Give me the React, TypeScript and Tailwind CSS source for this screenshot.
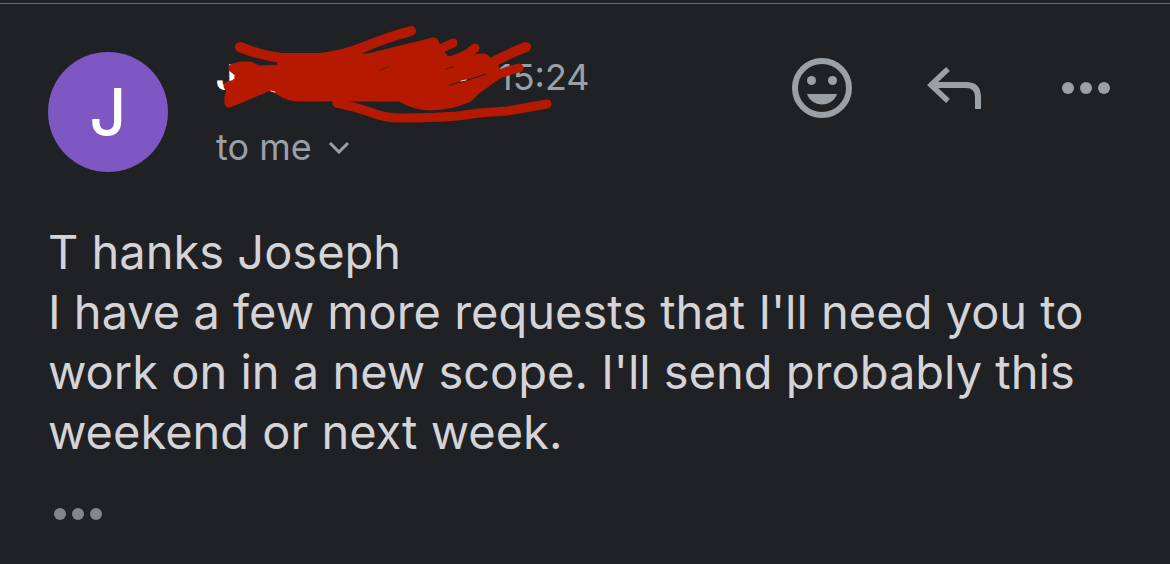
import React, { useState } from 'react';

function SmileIcon() {
  return (
    <svg viewBox="0 0 72 72" className="w-18 h-18" fill="currentColor" aria-hidden="true">
      <circle cx="36" cy="36" r="27" fill="none" stroke="currentColor" strokeWidth="6" />
      <circle cx="25.5" cy="28.5" r="4.5" />
      <circle cx="46.5" cy="28.5" r="4.5" />
      <path d="M21 42h30c-2 6-8 10.500-15 10.500S23 48 21 42z" />
    </svg>
  );
}

function ReplyIcon() {
  return (
    <svg viewBox="0 0 72 72" className="w-18 h-18" fill="none" stroke="currentColor" strokeWidth="6" aria-hidden="true">
      <path d="M30 17L13 33l17 16" strokeWidth="5.500" />
      <path d="M14 33h34q12 0 12 12v12" />
    </svg>
  );
}

function DotsIcon() {
  return (
    <svg viewBox="0 0 72 72" className="w-18 h-18" fill="currentColor" aria-hidden="true">
      <circle cx="18" cy="36" r="6" />
      <circle cx="36" cy="36" r="6" />
      <circle cx="54" cy="36" r="6" />
    </svg>
  );
}

// Marker scribble that hides the sender name
function Scribble() {
  return (
    <svg
      viewBox="216 17 340 110"
      className="absolute left-0 -top-10 w-[340px] h-[110px] max-w-none pointer-events-none"
      fill="none"
      stroke="#b51a00"
      strokeWidth="9"
      strokeLinecap="round"
      strokeLinejoin="round"
      aria-hidden="true"
    >
      <path
        d="M280 58H368L392 52L434 42L438 51L446 61L484 58L494 66L497 75L476 90L468 98Q450 106 430 106Q415 106 400 97H300Q288 97 280 91L270 86L229 103L229 97L231 91L228 86L235 84L239 80L239 73L233 68L241 66L250 66L258 70L284 69z"
        fill="#b51a00"
      />
      <path d="M240 47Q262 56 282 58H320Q342 56 364 47Q388 37 411 31" strokeWidth="10" />
      <path d="M438 50L453 43M446 62Q466 57 475 48" strokeWidth="9" />
      <path d="M486 66Q505 55 526 47" strokeWidth="10" />
      <path d="M484 80Q500 73 519 68" />
      <path d="M337 103Q355 107 370 112Q384 118 400 118Q432 118 457 116Q482 112 507 111L547 104" />
      <path d="M380 70L388 67M446 69L453 67" stroke="#5a1810" strokeWidth="1" />
      <path d="M449 85L468 80L486 74" stroke="#202124" strokeWidth="1" />
      <path d="M461 81L466 80M271 91L275 92" stroke="#e8d8d4" strokeWidth="1" />
    </svg>
  );
}

export default function App() {
  const [showQuoted, setShowQuoted] = useState(false);

  return (
    <div className="min-h-screen bg-[#202124] pt-[3px] font-['Inter','Liberation_Sans',sans-serif]">
      <article className="border-t border-[#6a6b6e]">
        {/* Header */}
        <header className="flex items-start px-12 pt-12">
          <div className="w-30 h-30 rounded-full bg-[#7e57c2] flex items-center justify-center flex-shrink-0 text-[64px] font-medium text-white">
            J
          </div>

          <div className="relative ml-12 mt-[5px] flex-1 text-4xl text-[#9aa0a6]">
            <div className="flex items-center leading-10">
              <span className="w-[282px] font-bold text-white">J</span>
              <time>15:24</time>
            </div>
            <Scribble />
            <button className="mt-[30px] flex items-center gap-4 leading-10">
              to me
              <svg viewBox="0 0 22 14" className="w-[22px] h-[14px]" fill="none" stroke="currentColor" strokeWidth="3" aria-hidden="true">
                <path d="M2 3l9 9 9-9" />
              </svg>
            </button>
          </div>

          {/* Actions */}
          <div className="flex gap-15 text-[#9aa0a6]">
            <button aria-label="Add reaction">
              <SmileIcon />
            </button>
            <button aria-label="Reply">
              <ReplyIcon />
            </button>
            <button aria-label="More options">
              <DotsIcon />
            </button>
          </div>
        </header>

        {/* Message */}
        <div className="px-12 pt-[50px] text-[47px] leading-[60px] text-[#d4d4d8]">
          <p>T hanks Joseph</p>
          <p>I have a few more requests that I'll need you to work on in a new scope. I'll send probably this weekend or next week.</p>
        </div>

        <button
          aria-label="Show quoted text"
          aria-expanded={showQuoted}
          onClick={() => setShowQuoted(!showQuoted)}
          className="ml-[54px] mt-[46px] flex gap-[6px]"
        >
          <span className="w-3 h-3 rounded-full bg-[#85868b]" />
          <span className="w-3 h-3 rounded-full bg-[#85868b]" />
          <span className="w-3 h-3 rounded-full bg-[#85868b]" />
        </button>
      </article>
    </div>
  );
}
